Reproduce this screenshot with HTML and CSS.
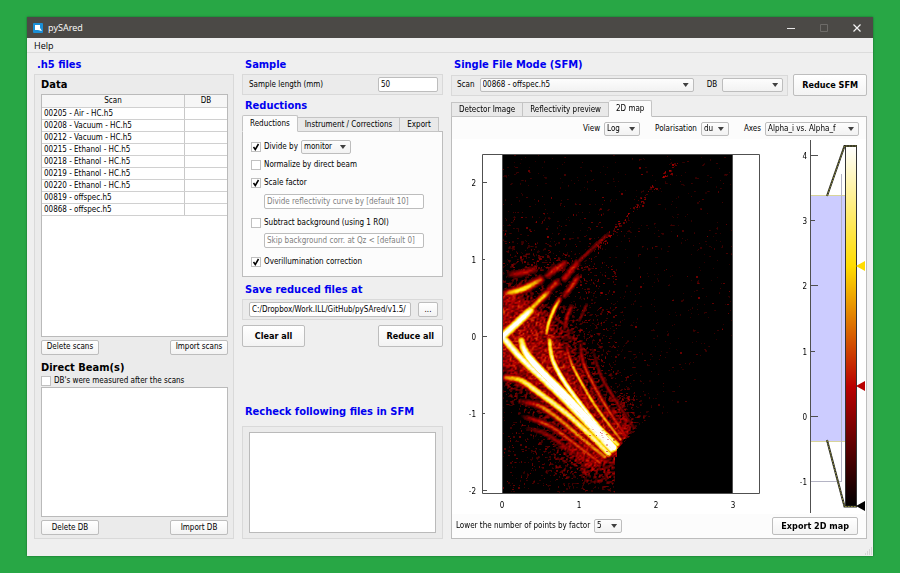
FILE: index.html
```html
<!DOCTYPE html>
<html lang="en">
<head>
<meta charset="utf-8">
<title>pySAred</title>
<link rel="stylesheet" href="styles.css">
</head>
<body>
<div class="window">
  <header class="titlebar">
    <svg class="app-icon" viewBox="0 0 10 10" aria-hidden="true"><rect width="10" height="10" rx="1" fill="#1b8fd6"/><path d="M2 2h5v3l2 3-4-1H2z" fill="#fff"/></svg>
    <span class="app-name">pySAred</span>
    <button class="win-btn" aria-label="Minimize"><svg viewBox="0 0 10 10"><path d="M1 5.500h8" stroke="#e8e8e8"/></svg></button>
    <button class="win-btn" aria-label="Maximize" disabled><svg viewBox="0 0 10 10"><path d="M1.500 1.500h7v7h-7z" fill="none" stroke="#6d6b68"/></svg></button>
    <button class="win-btn" aria-label="Close"><svg viewBox="0 0 10 10"><path d="M1.500 1.500l7 7m0-7l-7 7" stroke="#f4f4f4" stroke-width="1.200"/></svg></button>
  </header>
  <nav class="menubar"><a href="#help">Help</a></nav>

  <main class="columns">
    <section class="column">
      <h1 class="section-title">.h5 files</h1>
      <div class="group files">
        <h2 class="sub-title">Data</h2>
        <div class="table-box">
          <table>
            <colgroup><col class="col-scan"><col></colgroup>
            <thead><tr><th>Scan</th><th>DB</th></tr></thead>
            <tbody>
              <tr><td>00205 - Air - HC.h5</td><td></td></tr>
              <tr><td>00208 - Vacuum - HC.h5</td><td></td></tr>
              <tr><td>00212 - Vacuum - HC.h5</td><td></td></tr>
              <tr><td>00215 - Ethanol - HC.h5</td><td></td></tr>
              <tr><td>00218 - Ethanol - HC.h5</td><td></td></tr>
              <tr><td>00219 - Ethanol - HC.h5</td><td></td></tr>
              <tr><td>00220 - Ethanol - HC.h5</td><td></td></tr>
              <tr><td>00819 - offspec.h5</td><td></td></tr>
              <tr><td>00868 - offspec.h5</td><td></td></tr>
            </tbody>
          </table>
        </div>
        <div class="button-row"><button class="btn">Delete scans</button><button class="btn">Import scans</button></div>
        <h2 class="sub-title direct">Direct Beam(s)</h2>
        <label class="check"><input type="checkbox">DB's were measured after the scans</label>
        <div class="list-box"></div>
        <div class="button-row"><button class="btn">Delete DB</button><button class="btn">Import DB</button></div>
      </div>
    </section>

    <section class="column">
      <h1 class="section-title">Sample</h1>
      <div class="group field-row">
        <label for="length">Sample length (mm)</label>
        <input class="text short" id="length" type="text" value="50">
      </div>
      <h1 class="section-title spaced">Reductions</h1>
      <div class="tabs" role="tablist">
        <button class="tab active" role="tab">Reductions</button><button class="tab" role="tab">Instrument / Corrections</button><button class="tab" role="tab">Export</button>
      </div>
      <div class="panel options">
        <div class="option"><label class="check"><input type="checkbox" checked>Divide by</label><span class="select"><select class="w-monitor" aria-label="Divide by"><option>monitor</option></select></span></div>
        <label class="check option"><input type="checkbox">Normalize by direct beam</label>
        <label class="check option"><input type="checkbox" checked>Scale factor</label>
        <input class="text inset" type="text" aria-label="Scale factor" placeholder="Divide reflectivity curve by [default 10]">
        <label class="check option tall"><input type="checkbox">Subtract background (using 1 ROI)</label>
        <input class="text inset" type="text" aria-label="Skip background" placeholder="Skip background corr. at Qz &lt; [default 0]">
        <label class="check option tall"><input type="checkbox" checked>Overillumination correction</label>
      </div>
      <h1 class="section-title save">Save reduced files at</h1>
      <div class="group field-row">
        <input class="text path" type="text" aria-label="Save path" value="C:/Dropbox/Work.ILL/GitHub/pySAred/v1.5/">
        <button class="btn browse">...</button>
      </div>
      <div class="button-row actions"><button class="btn big">Clear all</button><button class="btn big">Reduce all</button></div>
      <h1 class="section-title recheck">Recheck following files in SFM</h1>
      <div class="group recheck-box"><div class="list-box"></div></div>
    </section>

    <section class="column">
      <h1 class="section-title">Single File Mode (SFM)</h1>
      <div class="sfm-row">
        <div class="group field-row sfm">
          <label for="scan">Scan</label>
          <span class="select grow"><select id="scan"><option>00868 - offspec.h5</option></select></span>
          <label class="db-label" for="db">DB</label>
          <span class="select"><select class="w-db" id="db"><option></option></select></span>
        </div>
        <button class="btn big">Reduce SFM</button>
      </div>
      <div class="tabs sfm-tabs" role="tablist">
        <button class="tab" role="tab">Detector Image</button><button class="tab" role="tab">Reflectivity preview</button><button class="tab active" role="tab">2D map</button>
      </div>
      <div class="panel map">
        <div class="map-controls">
          <span class="control"><label for="view">View</label><span class="select"><select class="w-view" id="view"><option>Log</option></select></span></span>
          <span class="control"><label for="pol">Polarisation</label><span class="select"><select class="w-pol" id="pol"><option>du</option></select></span></span>
          <span class="control"><label for="axes">Axes</label><span class="select"><select class="w-axes" id="axes"><option>Alpha_i vs. Alpha_f</option></select></span></span>
        </div>
        <svg class="plot" viewBox="452 139 414 375">
          <defs>
            <linearGradient id="thermal" x1="0" y1="0" x2="0" y2="1">
              <stop offset="0" stop-color="#fff"/><stop offset=".333" stop-color="#ffdc00"/><stop offset=".667" stop-color="#b90000"/><stop offset="1" stop-color="#000"/>
            </linearGradient>
          </defs>
          <rect x="452" y="139" width="414" height="375" fill="#fff"/>
          <foreignObject x="502" y="154" width="231" height="339"><canvas id="heat" width="231" height="339"></canvas></foreignObject>
          <path class="axis" d="M482.500 154.500H759.500V493.500H482.500zM502.500 154V493M732.500 154V493M483 182.500h4M483 259.500h2M483 336.500h4M483 413.500h2M483 490.500h4"/>
          <g class="ticks" text-anchor="end">
            <text x="476" y="186">2</text><text x="476" y="263">1</text><text x="476" y="340">0</text><text x="476" y="417">-1</text><text x="476" y="494">-2</text>
          </g>
          <g class="ticks" text-anchor="middle">
            <text x="502" y="508">0</text><text x="579" y="508">1</text><text x="656" y="508">2</text><text x="733" y="508">3</text>
          </g>
          <rect x="811" y="195" width="34" height="246" fill="#ccccff"/>
          <path d="M811 195.500h34M811 441.500h34" stroke="#d8d49a"/>
          <path d="M841.500 174V482M811 481.500h30" stroke="#b4b4c4" fill="none"/>
          <path class="axis" d="M810.500 140V513M811 155.500h7M811 220.500h4M811 285.500h7M811 351.500h4M811 416.500h7"/>
          <g class="ticks" text-anchor="end">
            <text x="807" y="159">4</text><text x="807" y="224">3</text><text x="807" y="289">2</text><text x="807" y="355">1</text><text x="807" y="420">0</text><text x="807" y="485">-1</text>
          </g>
          <rect x="845.500" y="146.500" width="11" height="360" fill="url(#thermal)" stroke="#333"/>
          <path class="handle" d="M827 196L844.500 146H857M827 440L844.500 506.500H857"/>
          <path class="handle-dash" d="M827 196L844.500 146H857M827 440L844.500 506.500H857"/>
          <path d="M856 266l9-5v10z" fill="#ffdc00"/><path d="M856 386l9-5v10z" fill="#b90000"/><path d="M856 506l9-5v10z" fill="#000"/>
        </svg>
        <div class="map-footer">
          <label for="factor">Lower the number of points by factor</label>
          <span class="select"><select class="w-factor" id="factor"><option>5</option></select></span>
          <button class="btn big export">Export 2D map</button>
        </div>
      </div>
    </section>
  </main>
  <svg class="grip" viewBox="0 0 8 8" aria-hidden="true"><path d="M7 1h1M5 3h1M7 3h1M3 5h1M5 5h1M7 5h1M1 7h1M3 7h1M5 7h1M7 7h1" stroke="#bdbdbd"/></svg>
</div>
<script src="heatmap.js"></script>
</body>
</html>
```
FILE: styles.css
```css
* { box-sizing: border-box; }
body {
  margin: 0;
  min-height: 100vh;
  padding: 17px 27px;
  display: flex;
  background: #28a745;
  color: #000;
  font: 8px/12px "DejaVu Sans Condensed", "DejaVu Sans", sans-serif;
}
button, input, select { font: inherit; color: inherit; margin: 0; }
h1, h2 { margin: 0; font-weight: bold; }

.window {
  flex: 1;
  min-width: 0;
  display: flex;
  flex-direction: column;
  position: relative;
  background: #efefef;
  box-shadow: 0 0 2px #14642a;
}
.titlebar {
  display: flex;
  align-items: center;
  height: 21px;
  padding-left: 6px;
  background: #4b4946;
  color: #fff;
  font: 9px/12px "Open Sans", sans-serif;
}
.app-icon { width: 10px; height: 10px; margin-right: 5px; }
.app-name { flex: 1; }
.win-btn { width: 33px; height: 21px; padding: 0; border: 0; background: none; }
.win-btn svg { width: 10px; height: 10px; display: block; margin: auto; }
.menubar {
  height: 15px;
  padding: 1px 7px;
  border-bottom: 1px solid #dcdcdc;
  font: 9px/14px "Open Sans", sans-serif;
}
.menubar a { color: inherit; text-decoration: none; display: block; }

.columns {
  flex: 1;
  display: grid;
  grid-template-columns: 200fr 201fr 416fr;
  gap: 8px;
  padding: 3px 6px 17px 7px;
}
.column { display: flex; flex-direction: column; min-width: 0; }
.section-title { padding-left: 3px; font-size: 11px; line-height: 18px; color: #0000f0; white-space: nowrap; }
.group { border: 1px solid #d9d9d9; background: #ebebeb; }

.files { flex: 1; display: flex; flex-direction: column; padding: 1px 5px 3px 6px; }
.sub-title { font-size: 11px; line-height: 18px; }
.table-box { flex: 244; border: 1px solid #bababa; background: #fff; }
.list-box { flex: 130; border: 1px solid #bababa; background: #fff; }
table { width: 100%; border-collapse: collapse; table-layout: fixed; }
.col-scan { width: 77%; }
th, td { height: 12px; padding: 0 2px; line-height: 11px; border-bottom: 1px solid #d0d0d0; white-space: nowrap; }
th { font-weight: normal; background: #f6f6f6; }
th + th, td + td { border-left: 1px solid #c8c8c8; }
.button-row { display: flex; justify-content: space-between; margin-top: 3px; }
.btn {
  min-width: 58px;
  height: 15px;
  padding: 0;
  border: 1px solid #bdbdbd;
  border-radius: 2px;
  background: linear-gradient(#fff, #f3f3f3);
  line-height: 12px;
  white-space: nowrap;
}
.btn.big { height: 22px; min-width: 63px; padding: 0 8px; font-size: 9px; font-weight: bold; }
.direct { margin-top: 6px; line-height: 14px; }

.check { display: flex; align-items: center; }
.check input {
  appearance: none;
  width: 10px;
  height: 10px;
  margin-right: 3px;
  border: 1px solid #c0c0c0;
  background: #fff;
}
.check input:checked { background: #fff url("data:image/svg+xml,%3Csvg xmlns='http://www.w3.org/2000/svg' viewBox='0 0 8 8'%3E%3Cpath d='M1.500 4l1.800 2.500L6.500 1' fill='none' stroke='%23000' stroke-width='1.500'/%3E%3C/svg%3E"); }

.field-row { display: flex; align-items: center; justify-content: space-between; height: 21px; padding: 0 4px 0 6px; }
.text { height: 15px; padding: 0 2px; border: 1px solid #bdbdbd; border-radius: 2px; background: #fff; }
.text::placeholder { color: #808080; }
.text.short { width: 60px; }
.text.path { width: 162px; }
.btn.browse { min-width: 20px; }
.spaced { margin-top: 2px; }

.tabs { display: flex; align-items: flex-end; height: 17px; margin-bottom: -1px; position: relative; }
.tab {
  height: 15px;
  padding: 0 7px;
  border: 1px solid #c4c4c4;
  border-left-width: 0;
  background: #e9e9e9;
  line-height: 12px;
  white-space: nowrap;
}
.tab:first-child { border-left-width: 1px; }
.tab.active { height: 17px; background: #fcfcfc; border-bottom-color: #fcfcfc; border-radius: 2px 2px 0 0; }
.panel { border: 1px solid #bdbdbd; background: #fcfcfc; }
.options { height: 146px; padding: 6px 8px; display: flex; flex-direction: column; }
.option { display: flex; align-items: center; height: 18px; }
.option.tall { height: 22px; padding-top: 5px; }
.inset { width: 160px; margin: 2px 0 0 13px; }
.save { margin-top: 4px; }
.actions { margin-top: 5px; }
.recheck { margin-top: 56px; }
.recheck-box { flex: 1; display: flex; margin-top: 5px; padding: 5px 6px; }

.select { position: relative; display: inline-flex; }
.select::after {
  content: "";
  position: absolute;
  right: 5px;
  top: 5px;
  width: 6px;
  height: 4px;
  background: #404040;
  clip-path: polygon(0 0, 100% 0, 50% 100%);
  pointer-events: none;
}
select {
  appearance: none;
  height: 14px;
  width: 100%;
  padding: 0 2px;
  border: 1px solid #bdbdbd;
  border-radius: 2px;
  background: linear-gradient(#fdfdfd, #f2f2f2);
  line-height: 12px;
}
.option .select { margin-left: 3px; }
.w-monitor { width: 50px; }
.w-db { width: 61px; }
.w-view { width: 36px; }
.w-pol { width: 28px; }
.w-axes { width: 94px; }
.w-factor { width: 28px; }
.grow { flex: 1; }

.sfm-row { display: flex; align-items: center; gap: 5px; }
.sfm { flex: 1; gap: 5px; padding-left: 5px; }
.db-label { margin-left: 8px; }
.sfm-tabs { margin-top: 4px; }
.map { flex: 1; display: flex; flex-direction: column; }
.map-controls { display: flex; justify-content: flex-end; gap: 15px; padding: 5px 7px 3px; }
.control { display: flex; align-items: center; gap: 4px; }
.plot { display: block; width: 100%; }
.axis { fill: none; stroke: #505050; }
.ticks { font: 8px "DejaVu Sans Condensed", sans-serif; }
.handle { fill: none; stroke: #222; stroke-width: 2; }
.handle-dash { fill: none; stroke: #8c8c3c; stroke-dasharray: 2 1; }
#heat { display: block; }
.map-footer { flex: 1; display: flex; align-items: center; gap: 4px; padding: 0 8px 0 4px; }
.btn.export { height: 18px; margin-left: auto; }
.grip { position: absolute; right: 1px; bottom: 1px; width: 8px; height: 8px; }
```
FILE: heatmap.js
```js
// Off-specular scattering map: intensity ridges on a diffuse, speckled background.
const canvas = document.getElementById("heat");
const ctx = canvas.getContext("2d");
const W = canvas.width, H = canvas.height;

let seed = 12345;
function rand() {
  seed = (seed * 1664525 + 1013904223) >>> 0;
  return seed / 4294967296;
}

const N = 512;
const lattice = Float32Array.from({ length: N * N }, rand);
function noise(x, y) {
  const xi = Math.floor(x), yi = Math.floor(y), fx = x - xi, fy = y - yi;
  const at = (i, j) => lattice[((j & 511) * N) + (i & 511)];
  const a = at(xi, yi) * (1 - fx) + at(xi + 1, yi) * fx;
  const b = at(xi, yi + 1) * (1 - fx) + at(xi + 1, yi + 1) * fx;
  return a * (1 - fy) + b * fy;
}

// Ridges: [peak, half width, start fade, end fade, points] in map pixels, origin at (0, 182).
const ridges = [
  [1.10, 3.2, 1, 0.8, [0,182, 14,169, 28,156]],
  [0.64, 2.3, 1, 0.6, [26,157, 36,147, 46,137]],
  [0.38, 2.3, 1, 0.7, [47,135, 55,127]],
  [0.36, 2.2, 1, 0.7, [62,124, 75,108]],
  [0.22, 1.5, 1, 0.5, [75,108, 90,94, 106,79]],
  [0.72, 2.6, 0.6, 0.6, [4,139, 12,137, 22,134, 38,125]],
  [0.33, 2.4, 0.6, 0.7, [8,120, 18,119, 31,115]],
  [0.37, 2.3, 0.7, 0.7, [45,121, 53,115, 62,109]],
  [0.72, 1.7, 0.8, 0.6, [44,179, 46,169, 51,156, 57,145]],
  [0.38, 2.0, 0.7, 0.7, [62,141, 69,132, 75,123]],
  [0.32, 1.6, 0.6, 0.7, [62,174, 65,161, 69,152]],
  [0.20, 1.3, 0.7, 0.7, [77,166, 84,150]],
  [1.00, 3.0, 1, 1, [0,182, 16,201, 39,223, 66,249, 109,295]],
  [1.30, 3.0, 0.6, 1, [19,186, 23,198, 36,214, 59,237, 84,263, 111,293]],
  [1.00, 2.0, 0.7, 0.8, [47,186, 50,205, 61,226, 76,247, 96,272, 115,290]],
  [0.62, 1.6, 0.4, 0.8, [64,192, 69,209, 81,232, 96,256, 118,285]],
  [0.42, 1.6, 0.4, 0.8, [78,190, 81,209, 93,234, 108,259, 123,281]],
  [0.24, 1.4, 0.3, 0.8, [90,194, 99,222, 113,246, 131,273]],
  [0.88, 2.6, 0.6, 1, [4,223, 19,226, 36,238, 59,255, 83,276, 106,299]],
  [0.54, 2.2, 0.3, 1, [18,247, 36,251, 56,264, 76,281, 102,302]],
  [0.42, 1.9, 0.2, 1, [20,262, 34,266, 50,273, 72,289, 97,308]],
  [0.25, 1.8, 0.3, 0.5, [24,274, 40,278, 60,290, 84,308]]
];

// Catmull-Rom smoothing of a point list into short segments.
function smooth(p) {
  const n = p.length / 2, out = [];
  const pt = i => { const k = Math.max(0, Math.min(n - 1, i)); return [p[2 * k], p[2 * k + 1]]; };
  for (let i = 0; i < n - 1; i++) {
    const a = pt(i - 1), b = pt(i), c = pt(i + 1), d = pt(i + 2);
    for (let s = 0; s < 4; s++) {
      const t = s / 4;
      for (const k of [0, 1]) {
        out.push(0.5 * (2 * b[k] + (c[k] - a[k]) * t + (2 * a[k] - 5 * b[k] + 4 * c[k] - d[k]) * t * t
          + (3 * b[k] - a[k] - 3 * c[k] + d[k]) * t * t * t));
      }
    }
  }
  out.push(p[2 * n - 2], p[2 * n - 1]);
  return out;
}
for (const r of ridges) r[4] = smooth(r[4]);

function ridgeValue(x, y) {
  let best = 0;
  for (const [peak, width, startFade, endFade, p] of ridges) {
    let d2 = 1e9, along = 0;
    const n = p.length / 2 - 1;
    for (let i = 0; i < n; i++) {
      const ax = p[2 * i], ay = p[2 * i + 1], bx = p[2 * i + 2] - ax, by = p[2 * i + 3] - ay;
      const t = Math.max(0, Math.min(1, ((x - ax) * bx + (y - ay) * by) / (bx * bx + by * by)));
      const dx = x - ax - t * bx, dy = y - ay - t * by, d = dx * dx + dy * dy;
      if (d < d2) { d2 = d; along = (i + t) / n; }
    }
    const rise = startFade + (1 - startFade) * Math.min(1, along * 3);
    const fall = endFade + (1 - endFade) * Math.min(1, (1 - along) * 4);
    const v = peak * rise * fall * Math.exp(-d2 / (2 * width * width));
    if (v > best) best = v;
  }
  return best;
}
function blob(x, y, cx, cy, rx, ry) {
  return Math.exp(-(((x - cx) / rx) ** 2) - (((y - cy) / ry) ** 2));
}

function thermal(v) {
  v = Math.max(0, Math.min(1, v)) * 3;
  if (v < 1) return [185 * v, 0, 0];
  if (v < 2) return [185 + 70 * (v - 1), 220 * (v - 1), 0];
  return [255, 220 + 35 * (v - 2), 255 * (v - 2)];
}

const image = ctx.createImageData(W, H);
for (let y = 0; y < H; y++) {
  for (let x = 0; x < W; x++) {
    // Distance along and across the lower beam, which runs along y = x.
    const u = (x + (y - 182)) / 2, across = (x - (y - 182)) / 2;
    let diffuse = 0.24 * blob(x, y, 8, 158, 32, 26) + 0.22 * blob(x, y, 24, 184, 36, 26);
    diffuse += 0.12 * blob(x, y, 16, 166, 14, 14);
    if (u > -20) diffuse += 0.33 * Math.exp(-((across / 25) ** 2)) * (u > 112 ? 0.6 : 1);
    diffuse += 0.13 * blob(x, y, 70, 200, 38, 50) + 0.08 * blob(x, y, 25, 120, 50, 26);
    diffuse += 0.16 * blob(x, y, 85, 306, 45, 24) + 0.03 * blob(x, y, 30, 90, 60, 40);
    diffuse += 0.08 * blob(x, y, 120, 262, 16, 24);
    diffuse = Math.min(diffuse, 0.36);
    const ridge = ridgeValue(x, y);
    const n = noise(x * 0.55 + y * 0.12, y * 0.62);
    const spread = 0.52 - 0.7 * Math.max(0, diffuse - 0.1);
    let v = diffuse + (n - 0.74) * spread;
    if (v < 0.07) v = 0;
    if (ridge > 0.06) v = Math.max(v, ridge + (n - 0.5) * 0.12);
    // The detector edge cuts off the scattering past the end of the beam.
    if ((x > 114 && y > 182 && x + y > 409) || (x > 112 && y > 302)) v = 0;
    const c = thermal(v), k = (y * W + x) * 4;
    image.data[k] = c[0]; image.data[k + 1] = c[1]; image.data[k + 2] = c[2]; image.data[k + 3] = 255;
  }
}
ctx.putImageData(image, 0, 0);

// Isolated counts: scattered noise, and the faint tail of the upper beam.
function speck(x, y, strength) {
  ctx.fillStyle = `rgba(185,0,0,${strength})`;
  ctx.fillRect(Math.round(x), Math.round(y), rand() > 0.5 ? 2 : 1, rand() > 0.6 ? 2 : 1);
}
for (let i = 0; i < 110; i++) speck(rand() * 228, rand() * 180, 0.15 + rand() * 0.5);
for (let i = 0; i < 30; i++) speck(120 + rand() * 75, 185 + rand() * 75, 0.15 + rand() * 0.4);
for (let i = 0; i < 130; i++) speck(rand() * 100, 115 - rand() * rand() * 90, 0.25 + rand() * 0.45);
for (let i = 0; i < 150; i++) speck(70 + rand() * 45, 110 + rand() * 110, 0.25 + rand() * 0.4);
for (let i = 0; i < 60; i++) speck(115 + rand() * 18, 232 + rand() * 42, 0.25 + rand() * 0.4);
for (let i = 0; i < 200; i++) speck(rand() * 111, 270 + rand() * 66, 0.2 + rand() * 0.4);
for (let i = 0; i < 120; i++) {
  const t = rand();
  if (t > 0.62 && t < 0.68 || t > 0.76 && t < 0.84) continue;
  speck(91 + t * 80 + rand() * 6, 91 - t * 84 + rand() * 6, 0.35 + rand() * 0.4);
}
```
